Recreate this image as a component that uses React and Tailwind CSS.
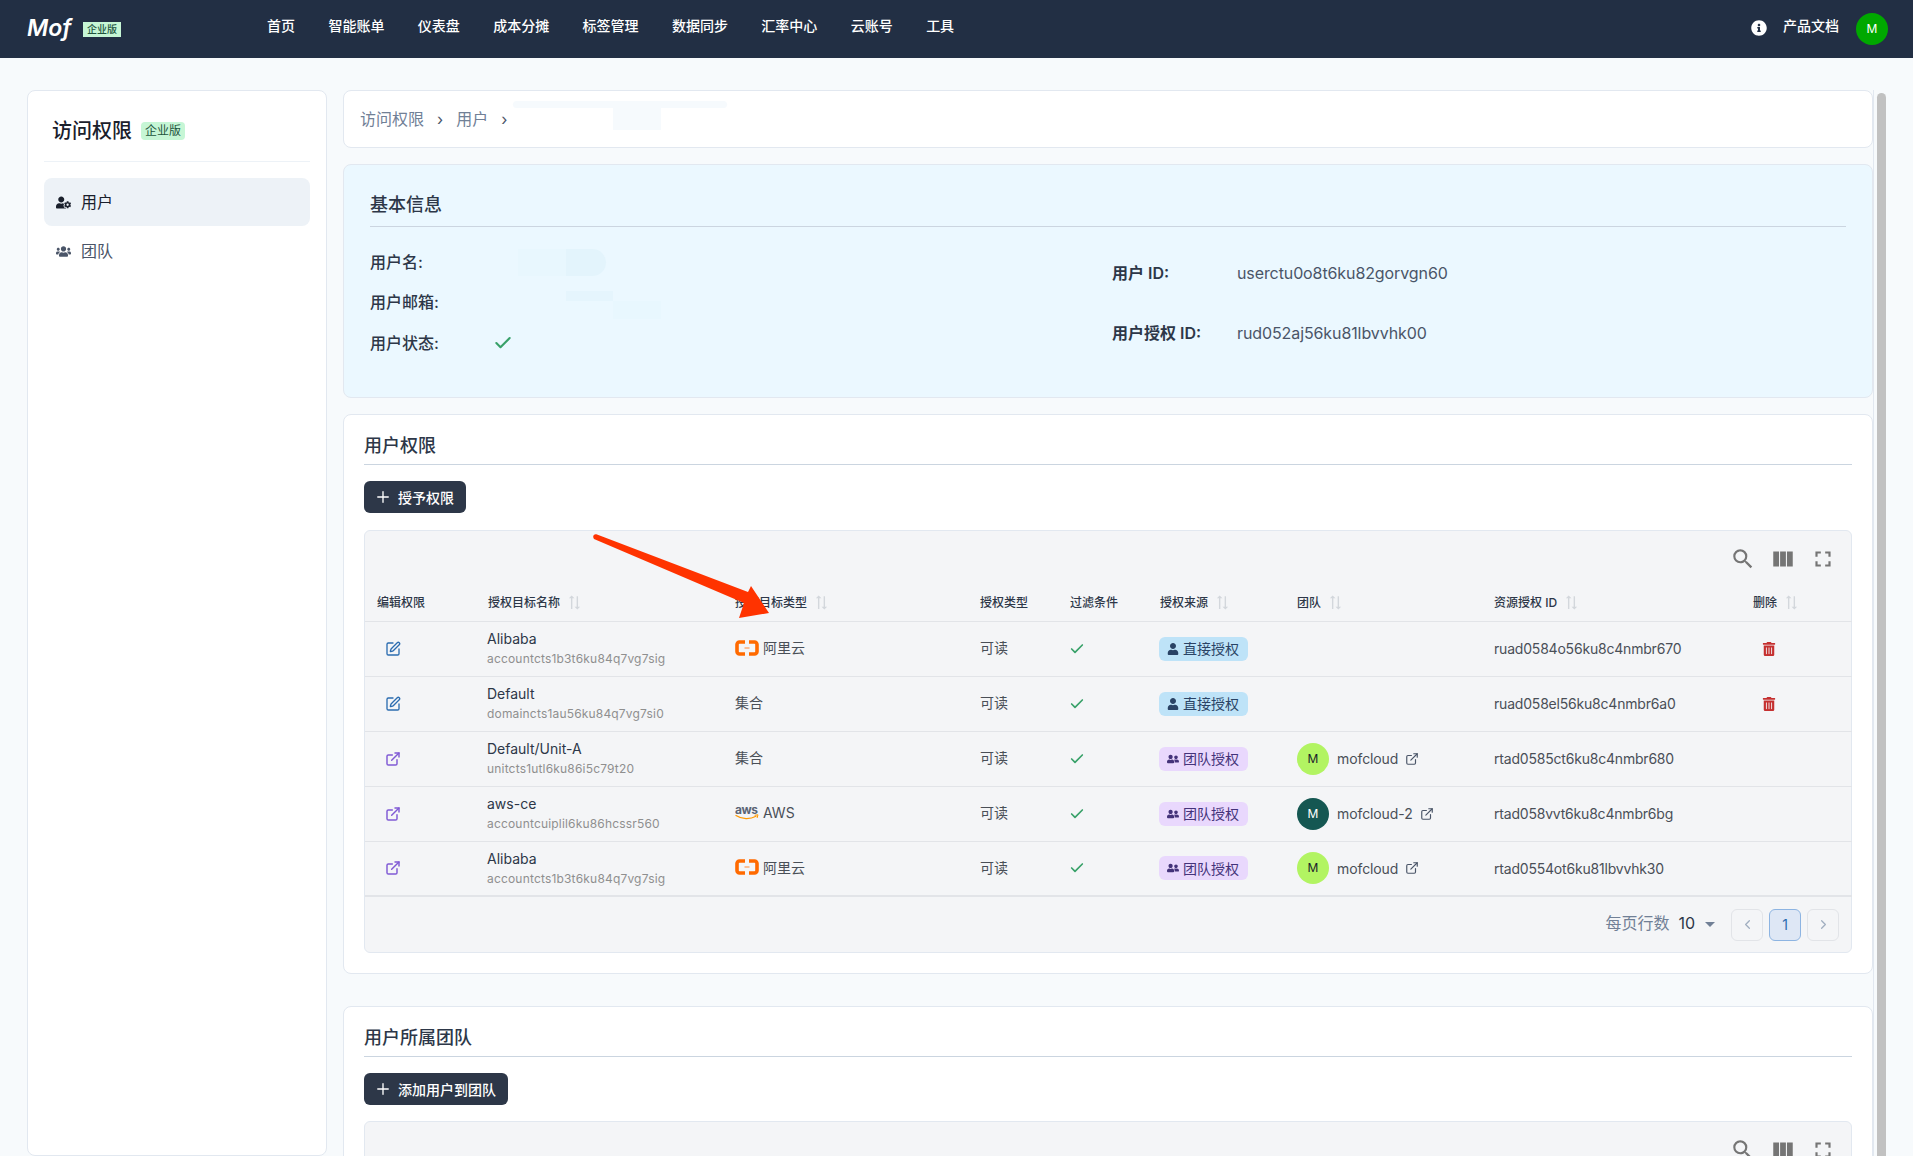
import { Check, ChevronLeft, ChevronRight, ExternalLink, Plus, SquarePen } from 'lucide-react';
import { FaInfoCircle, FaTrashAlt, FaUser, FaUserCog, FaUserFriends, FaUsers } from 'react-icons/fa';
import { MdFullscreen, MdSearch, MdSyncAlt, MdViewColumn } from 'react-icons/md';

const NAV = ['首页', '智能账单', '仪表盘', '成本分摊', '标签管理', '数据同步', '汇率中心', '云账号', '工具'];

const HEADERS = [
  ['编辑权限', false, 'w-[111px]'],
  ['授权目标名称', true, 'w-[247px]'],
  ['授权目标类型', true, 'w-[245px]'],
  ['授权类型', false, 'w-[90px]'],
  ['过滤条件', false, 'w-[90px]'],
  ['授权来源', true, 'w-[137px]'],
  ['团队', true, 'w-[197px]'],
  ['资源授权 ID', true, 'w-[259px]'],
  ['删除', true, 'w-[111px]'],
];

const ROWS = [
  { name: 'Alibaba', sub: 'accountcts1b3t6ku84q7vg7sig', provider: 'ali', direct: true, id: 'ruad0584o56ku8c4nmbr670' },
  { name: 'Default', sub: 'domaincts1au56ku84q7vg7si0', provider: 'set', direct: true, id: 'ruad058el56ku8c4nmbr6a0' },
  { name: 'Default/Unit-A', sub: 'unitcts1utl6ku86i5c79t20', provider: 'set', team: 'mofcloud', light: true, id: 'rtad0585ct6ku8c4nmbr680' },
  { name: 'aws-ce', sub: 'accountcuiplil6ku86hcssr560', provider: 'aws', team: 'mofcloud-2', id: 'rtad058vvt6ku8c4nmbr6bg' },
  { name: 'Alibaba', sub: 'accountcts1b3t6ku84q7vg7sig', provider: 'ali', team: 'mofcloud', light: true, id: 'rtad0554ot6ku81lbvvhk30' },
];

function AliLogo() {
  return (
    <svg width="24" height="16" viewBox="0 0 24 16" fill="none" className="shrink-0">
      <path d="M10 2H4.5A2.5 2.5 0 0 0 2 4.5v7A2.5 2.5 0 0 0 4.5 14H10" stroke="#FF6A00" strokeWidth="3.6" />
      <path d="M14 2h5.5A2.5 2.5 0 0 1 22 4.5v7a2.5 2.5 0 0 1-2.5 2.5H14" stroke="#FF6A00" strokeWidth="3.6" />
      <path d="M9.5 8h5" stroke="#FF9A55" strokeWidth="1.2" />
    </svg>
  );
}

function AwsLogo() {
  return (
    <svg width="24" height="17" viewBox="0 0 24 17" fill="none" className="shrink-0">
      <text x="0" y="9.5" fontSize="12" fontWeight="700" fill="#5b6475" fontFamily="Inter, sans-serif" textLength="23">aws</text>
      <path d="M1 11.5c6 4 14 4 20 .8" stroke="#FF9900" strokeWidth="1.3" strokeLinecap="round" />
      <path d="M20 11.2l3-.4-.8 2.8" stroke="#FF9900" strokeWidth="1" strokeLinecap="round" />
    </svg>
  );
}

function Provider({ kind }) {
  if (kind === 'set') return <span>集合</span>;
  return (
    <span className="flex items-center gap-[4px]">
      {kind === 'ali' ? <AliLogo /> : <AwsLogo />}
      {kind === 'ali' ? '阿里云' : 'AWS'}
    </span>
  );
}

function Card({ children, className }) {
  return <section className={`rounded-lg border border-[#E2E8F0] bg-white px-[20px] ${className}`}>{children}</section>;
}

function CardTitle({ children }) {
  return <h2 className="h-[33px] border-b border-[#CBD5E0] text-[18px] leading-[27px] font-medium text-[#2D3748]">{children}</h2>;
}

function DarkButton({ children }) {
  return (
    <button className="flex h-[32px] items-center gap-[6px] rounded-md bg-[#2D3748] pr-[12px] pl-[10px] text-[14px] font-medium text-white">
      <Plus size={18} strokeWidth={1.8} />
      {children}
    </button>
  );
}

function TableTools() {
  return (
    <div className="flex items-center justify-end gap-[14px] pr-[15px] text-[#757575]">
      <MdSearch size={26} />
      <MdViewColumn size={26} />
      <MdFullscreen size={26} />
    </div>
  );
}

function PermissionTable() {
  return (
    <div className="relative mt-[17px] h-[423px] rounded-md border border-[#E2E8F0] bg-[#F4F5F7]">
      <div className="h-[47px] pt-[15px]">
        <TableTools />
      </div>
      <table className="w-full table-fixed border-collapse">
        <colgroup>
          {HEADERS.map(([label, , width]) => <col key={label} className={width} />)}
        </colgroup>
        <thead>
          <tr className="h-[43px] border-b border-[#E2E4E8]">
            {HEADERS.map(([label, sortable]) => (
              <th key={label} className="pt-[7px] pl-[12px] text-left text-[12px] font-medium text-[#2D3748]">
                <span className="flex items-center gap-[6px]">
                  {label}
                  {sortable && <MdSyncAlt size={17} className="rotate-90 text-[#D3D7DC]" />}
                </span>
              </th>
            ))}
          </tr>
        </thead>
        <tbody className="border-b-2 border-[#E2E4E8] text-[14px] text-[#4A4F57]">
          {ROWS.map((row, i) => (
            <tr key={i} className="h-[55px] border-b border-[#E2E4E8] last:border-b-0">
              <td className="pl-[20px]">
                {row.direct
                  ? <SquarePen size={16} strokeWidth={2} className="text-[#2B6CB0]" />
                  : <ExternalLink size={16} strokeWidth={2.2} className="text-[#805AD5]" />}
              </td>
              <td className="pl-[11px]">
                <div className="leading-[18px] text-[#2D3748]">{row.name}</div>
                <div className="mt-[3px] text-[12px] leading-[16px] tracking-[0.18px] text-[#8F8F8F]">{row.sub}</div>
              </td>
              <td className="pb-[2px] pl-[12px]"><Provider kind={row.provider} /></td>
              <td className="pb-[2px] pl-[12px]">可读</td>
              <td className="pl-[11px]"><Check size={16} strokeWidth={2.5} className="text-[#38A169]" /></td>
              <td className="pl-[11px]">
                {row.direct ? (
                  <span className="flex h-[24px] w-[89px] items-center gap-[4px] rounded-md bg-[#BEE3F8] pl-[8px] text-[#2A4365]">
                    <FaUser size={12} className="shrink-0" />直接授权
                  </span>
                ) : (
                  <span className="flex h-[24px] w-[89px] items-center gap-[4px] rounded-md bg-[#E9D8FD] pl-[8px] text-[#44337A]">
                    <FaUserFriends size={12} className="shrink-0" />团队授权
                  </span>
                )}
              </td>
              <td className="pl-[12px]">
                {row.team && (
                  <span className="flex items-center">
                    {row.light ? (
                      <span className="flex h-[32px] w-[32px] items-center justify-center rounded-full bg-[#B2F462] text-[12px] text-[#1A202C]">M</span>
                    ) : (
                      <span className="flex h-[32px] w-[32px] items-center justify-center rounded-full bg-[#155752] text-[12px] text-white">M</span>
                    )}
                    <span className="ml-[8px] tracking-[-0.1px]">{row.team}</span>
                    <ExternalLink size={14} className="ml-[7px] text-[#4A5568]" />
                  </span>
                )}
              </td>
              <td className="pl-[12px] tracking-[-0.2px]">{row.id}</td>
              <td className="pl-[21px]">{row.direct && <FaTrashAlt size={14} className="text-[#C53030]" />}</td>
            </tr>
          ))}
        </tbody>
      </table>
      <div className="flex h-[55px] items-center justify-end gap-[6px] pr-[12px]">
        <span className="mb-[3px] text-[16px] text-[#718096]">每页行数</span>
        <span className="mb-[3px] ml-[3px] text-[16px] text-[#2D3748]">10</span>
        <span className="mr-[10px] ml-[4px] h-0 w-0 border-x-[5px] border-t-[5px] border-x-transparent border-t-[#718096]" />
        <span className="flex h-[32px] w-[32px] items-center justify-center rounded-md border border-[#E2E4E8] text-[#A0AEC0]"><ChevronLeft size={15} /></span>
        <span className="flex h-[32px] w-[32px] items-center justify-center rounded-md border border-[#8DB4E2] bg-[#DEE7F5] text-[14px] text-[#2B6CB0]">1</span>
        <span className="flex h-[32px] w-[32px] items-center justify-center rounded-md border border-[#E2E4E8] text-[#A0AEC0]"><ChevronRight size={15} /></span>
      </div>
      {/* annotation arrow drawn over the header */}
      <svg width="190" height="100" viewBox="0 0 190 100" className="absolute top-[0px] left-[222px]">
        <path d="M7 8C5 5 7 2.5 10 3.5L161 61L164 55L182 82L152 87L157 72Z" fill="#FF3300" />
      </svg>
    </div>
  );
}

export default function App() {
  return (
    <div className="flex h-[1156px] flex-col overflow-hidden bg-[#F7FAFC] font-['Inter','Noto_Sans_CJK_SC',sans-serif]">
      {/* Top nav */}
      <header className="flex h-[58px] shrink-0 items-center bg-[#222F44] pr-[25px] pl-[27px] text-white">
        <span className="mb-[2px] w-[45px] text-[23px] font-semibold italic">Mof</span>
        <span className="ml-[11px] bg-[#C6F6D5] px-[4px] text-[10px] leading-[15px] font-medium text-[#22543D]">企业版</span>
        <nav className="mb-[7px] ml-[146px] flex gap-[33.4px] text-[14px] font-medium">
          {NAV.map(item => <span key={item}>{item}</span>)}
        </nav>
        <FaInfoCircle size={16} className="mb-[2px] ml-auto" />
        <span className="mb-[7px] ml-[16px] text-[14px] font-medium">产品文档</span>
        <span className="ml-[17px] flex h-[32px] w-[32px] items-center justify-center rounded-full bg-[#00A800] text-[12px]">M</span>
      </header>

      <div className="flex min-h-0 flex-1 pt-[32px] pl-[27px]">
        {/* Sidebar */}
        <aside className="w-[300px] shrink-0 rounded-lg border border-[#E2E8F0] bg-white px-[16px]">
          <div className="flex h-[71px] items-center gap-[9px] border-b border-[#EDF2F7] pt-[9px] pl-[8px]">
            <span className="text-[20px] font-medium text-[#1A202C]">访问权限</span>
            <span className="rounded-sm bg-[#C6F6D5] px-[4px] text-[12px] leading-[18px] text-[#22543D]">企业版</span>
          </div>
          <div className="mt-[16px] flex h-[48px] items-center gap-[10px] rounded-lg bg-[#EDF2F7] pl-[12px] text-[#1A202C]">
            <FaUserCog size={15} />
            <span>用户</span>
          </div>
          <div className="mt-[1px] flex h-[48px] items-center gap-[10px] pl-[12px] text-[#4A5568]">
            <FaUsers size={15} />
            <span>团队</span>
          </div>
        </aside>

        {/* Content */}
        <main className="ml-[16px] w-[1530px] shrink-0">
          <div className="relative flex h-[58px] items-center gap-[13px] rounded-lg border border-[#E2E8F0] bg-white pl-[16px] text-[#718096]">
            <span>访问权限</span>
            <span className="text-[#4A5568]">›</span>
            <span>用户</span>
            <span className="text-[#4A5568]">›</span>
            <span className="absolute top-[10px] left-[169px] h-[7px] w-[214px] rounded-full bg-[#F6FAFD]" />
            <span className="absolute top-[17px] left-[269px] h-[22px] w-[48px] bg-[#F6FAFD]" />
          </div>

          <section className="relative mt-[16px] h-[234px] rounded-lg border border-[#E2E8F0] bg-[#EBF8FF] px-[26px] pt-[26px]">
            <h2 className="h-[36px] border-b border-[#CBD5E0] text-[18px] leading-[27px] font-medium text-[#2D3748]">基本信息</h2>
            <div className="mt-[14px] flex">
              <dl className="w-[742px] text-[#2D3748]">
                <dt className="h-[41px] leading-[42px] font-medium">用户名:</dt>
                <dt className="h-[40px] leading-[40px] font-medium">用户邮箱:</dt>
                <dt className="flex h-[41px] items-center font-medium">
                  用户状态:<Check size={20} strokeWidth={2.5} className="ml-[54px] text-[#38A169]" />
                </dt>
              </dl>
              <dl className="pt-[20px]">
                <div className="flex h-[60px] items-start leading-[24px]">
                  <dt className="w-[125px] font-semibold text-[#2D3748]">用户 ID:</dt>
                  <dd className="tracking-[-0.1px] text-[#4A5568]">userctu0o8t6ku82gorvgn60</dd>
                </div>
                <div className="flex items-start leading-[24px]">
                  <dt className="w-[125px] font-semibold text-[#2D3748]">用户授权 ID:</dt>
                  <dd className="tracking-[-0.1px] text-[#4A5568]">rud052aj56ku81lbvvhk00</dd>
                </div>
              </dl>
            </div>
            <span className="absolute top-[84px] left-[174px] h-[27px] w-[48px] bg-[#E8F7FE]" />
            <span className="absolute top-[84px] left-[222px] h-[27px] w-[40px] rounded-r-full bg-[#E3F4FC]" />
            <span className="absolute top-[126px] left-[222px] h-[10px] w-[47px] bg-[#E5F5FD]" />
            <span className="absolute top-[136px] left-[269px] h-[18px] w-[48px] bg-[#E8F7FE]" />
          </section>

          <Card className="mt-[16px] h-[560px] pt-[17px]">
            <CardTitle>用户权限</CardTitle>
            <div className="mt-[16px]"><DarkButton>授予权限</DarkButton></div>
            <PermissionTable />
          </Card>

          <Card className="mt-[32px] h-[300px] pt-[17px]">
            <CardTitle>用户所属团队</CardTitle>
            <div className="mt-[16px]"><DarkButton>添加用户到团队</DarkButton></div>
            <div className="mt-[16px] h-[200px] rounded-md border border-[#E2E8F0] bg-[#F4F5F7] pt-[15px]">
              <TableTools />
            </div>
          </Card>
        </main>

        {/* Scrollbar of the content column */}
        <div className="w-[14px] shrink-0 border-l border-[#E2E8F0] pt-[3px] pl-[3px]">
          <div className="h-full w-[9px] rounded-t-full bg-[#C1C1C1]" />
        </div>
      </div>
    </div>
  );
}
